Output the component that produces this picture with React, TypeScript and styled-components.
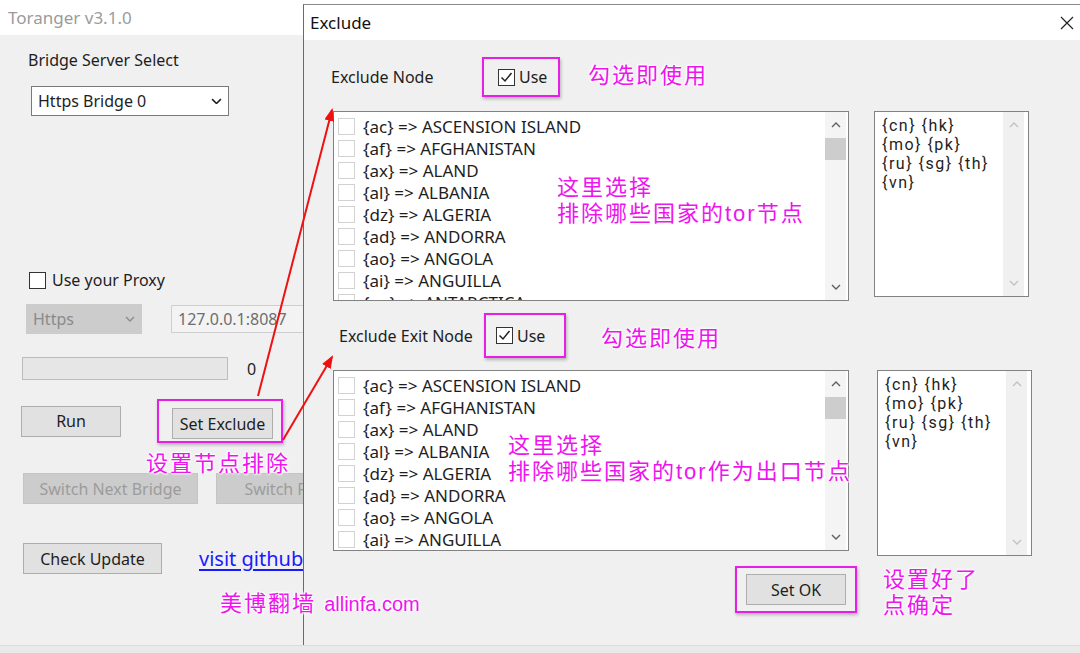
import React from "react";
import styled, { createGlobalStyle } from "styled-components";

const GlobalStyle = createGlobalStyle`
  html, body {
    margin: 0;
    padding: 0;
    background: #f0f0f0;
  }
  body {
    font-family: "Noto Sans", "Noto Sans CJK SC", sans-serif;
  }
`;

const Screen = styled.div`
  position: relative;
  width: 1080px;
  height: 653px;
  overflow: hidden;
  display: flex;
  flex-direction: column;
  background: #f0f0f0;
  color: #1e1e1e;
  font-size: 16px;
`;

const Desktop = styled.div`
  display: flex;
  height: 645px;
`;

const BottomStrip = styled.div`
  flex: 1;
  background: #e9e9e9;
  border-top: 1px solid #dcdcdc;
`;

/* ---------- main window ---------- */

const MainWindow = styled.div`
  width: 303px;
  flex: none;
  overflow: hidden;
  display: flex;
  flex-direction: column;
`;

const MainTitle = styled.div`
  height: 35px;
  flex: none;
  background: #fff;
  display: flex;
  align-items: center;
  padding-left: 8px;
  color: #9b9b9b;
  font-size: 17px;
  white-space: nowrap;
`;

const MainBody = styled.div`
  width: 380px;
  display: flex;
  flex-direction: column;
`;

const Row = styled.div<{ $mt?: number; $ml?: number; $gap?: number; $h?: number; $top?: boolean }>`
  display: flex;
  align-items: ${(p) => (p.$top ? "flex-start" : "center")};
  flex: none;
  margin-top: ${(p) => p.$mt ?? 0}px;
  margin-left: ${(p) => p.$ml ?? 0}px;
  gap: ${(p) => p.$gap ?? 0}px;
  ${(p) => (p.$h ? `height: ${p.$h}px;` : "")}
  white-space: nowrap;
`;

const Label = styled.span<{ $w?: number; $ml?: number }>`
  display: inline-block;
  line-height: 20px;
  ${(p) => (p.$w ? `width: ${p.$w}px;` : "")}
  margin-left: ${(p) => p.$ml ?? 0}px;
  flex: none;
`;

const SelectBox = styled.div<{ $w: number; $disabled?: boolean }>`
  box-sizing: border-box;
  width: ${(p) => p.$w}px;
  height: 30px;
  display: flex;
  align-items: center;
  justify-content: space-between;
  padding: 0 6px 0 6px;
  background: ${(p) => (p.$disabled ? "#cccccc" : "#ffffff")};
  border: 1px solid ${(p) => (p.$disabled ? "#cccccc" : "#7a7a7a")};
  color: ${(p) => (p.$disabled ? "#8a8a8a" : "#1e1e1e")};
`;

const TextInput = styled.div`
  box-sizing: border-box;
  width: 160px;
  height: 28px;
  display: flex;
  align-items: center;
  padding-left: 6px;
  background: #f3f3f3;
  border: 1px solid #cfcfcf;
  color: #6e6e6e;
`;

const Progress = styled.div`
  box-sizing: border-box;
  width: 206px;
  height: 23px;
  background: #e6e6e6;
  border: 1px solid #bcbcbc;
`;

const WinButton = styled.button<{ $w: number; $disabled?: boolean }>`
  box-sizing: border-box;
  width: ${(p) => p.$w}px;
  height: 31px;
  flex: none;
  margin: 0;
  padding: 0;
  display: flex;
  align-items: center;
  justify-content: center;
  font-family: inherit;
  font-size: 16px;
  white-space: nowrap;
  overflow: hidden;
  background: ${(p) => (p.$disabled ? "#cccccc" : "#e1e1e1")};
  border: 1px solid ${(p) => (p.$disabled ? "#c4c4c4" : "#adadad")};
  color: ${(p) => (p.$disabled ? "#9c9c9c" : "#1e1e1e")};
`;

const Link = styled.span`
  color: #1a1aff;
  font-size: 20px;
  text-decoration: underline;
  text-underline-offset: 3px;
`;

const Box = styled.span<{ $light?: boolean }>`
  box-sizing: border-box;
  width: 17px;
  height: 17px;
  flex: none;
  display: inline-flex;
  align-items: center;
  justify-content: center;
  background: #fff;
  border: 1px solid ${(p) => (p.$light ? "#d2d2d2" : "#333333")};
`;

const Mark = styled.div<{ $pad: string; $w?: number; $h?: number }>`
  box-sizing: border-box;
  display: flex;
  align-items: center;
  flex: none;
  padding: ${(p) => p.$pad};
  ${(p) => (p.$w ? `width: ${p.$w}px;` : "")}
  ${(p) => (p.$h ? `height: ${p.$h}px;` : "")}
  border: 2px solid #e61ee6;
  box-shadow: 1px 2px 3px rgba(0, 0, 0, 0.25);
`;

/* ---------- dialog ---------- */

const DialogColumn = styled.div`
  flex: 1;
  display: flex;
  flex-direction: column;
`;

const TopStrip = styled.div`
  height: 4px;
  flex: none;
  background: #fff;
`;

const Dialog = styled.div`
  flex: 1;
  display: flex;
  flex-direction: column;
  border-top: 1px solid #8a8a8a;
  border-left: 1px solid #6a6a6a;
`;

const DialogTitle = styled.div`
  height: 35px;
  flex: none;
  background: #fff;
  display: flex;
  align-items: center;
  justify-content: space-between;
  padding: 0 6px 0 6px;
  font-size: 17px;
  color: #111;
`;

const DialogBody = styled.div`
  flex: 1;
  display: flex;
  flex-direction: column;
  padding-left: 27px;
`;

const ListBox = styled.div<{ $h: number }>`
  box-sizing: border-box;
  width: 516px;
  height: ${(p) => p.$h}px;
  flex: none;
  display: flex;
  background: #fff;
  border: 1px solid #828282;
  overflow: hidden;
`;

const ListItems = styled.div`
  flex: 1;
  padding: 3px 0 0 4px;
  overflow: hidden;
  font-size: 17px;
`;

const ListRow = styled.div`
  height: 22px;
  display: flex;
  align-items: center;
  gap: 8px;
  white-space: nowrap;
`;

const Scroll = styled.div<{ $mr?: number; $dim?: boolean }>`
  width: 21px;
  flex: none;
  margin-right: ${(p) => p.$mr ?? 2}px;
  display: flex;
  flex-direction: column;
  align-items: center;
  background: ${(p) => (p.$dim ? "#f0f0f0" : "#f4f4f4")};
  color: ${(p) => (p.$dim ? "#c2c2c2" : "#606060")};
`;

const ScrollArrow = styled.div`
  height: 26px;
  width: 100%;
  display: flex;
  align-items: center;
  justify-content: center;
`;

const Thumb = styled.div`
  height: 22px;
  width: 100%;
  background: #cdcdcd;
`;

const Spacer = styled.div`
  flex: 1;
`;

const CodeBox = styled.div<{ $h: number }>`
  box-sizing: border-box;
  width: 155px;
  height: ${(p) => p.$h}px;
  flex: none;
  display: flex;
  background: #fff;
  border: 1px solid #828282;
`;

const CodeText = styled.div`
  flex: 1;
  padding: 4px 0 0 7px;
  font-family: Roboto, "Noto Sans", sans-serif;
  font-size: 16px;
  letter-spacing: 1.5px;
  line-height: 19px;
  white-space: nowrap;
`;

/* ---------- annotations ---------- */

const Overlay = styled.div`
  position: absolute;
  inset: 0;
  pointer-events: none;
`;

const Note = styled.div<{ $x: number; $y: number }>`
  position: absolute;
  left: ${(p) => p.$x}px;
  top: ${(p) => p.$y}px;
  font-family: "Liberation Sans", "Noto Sans CJK SC", sans-serif;
  font-size: 22px;
  line-height: 26px;
  letter-spacing: 2px;
  color: #ee14ee;
  white-space: nowrap;
  text-shadow: 0 0 2px #fff, 0 0 3px #fff, 1px 1px 2px #fff, -1px -1px 2px #fff;
`;

const Latin = styled.span`
  font-size: 20px;
  letter-spacing: 0;
`;

const Arrows = styled.svg`
  position: absolute;
  left: 0;
  top: 0;
`;

const Chevron = ({ up = false, size = 10 }: { up?: boolean; size?: number }) => (
  <svg width={size} height={size * 0.6} viewBox="0 0 10 6">
    <polyline
      points={up ? "1,5 5,1 9,5" : "1,1 5,5 9,1"}
      fill="none"
      stroke="currentColor"
      strokeWidth="1.4"
    />
  </svg>
);

const Check = () => (
  <svg width="13" height="13" viewBox="0 0 13 13">
    <polyline points="1.5,6.5 5,10 11.5,2" fill="none" stroke="#222" strokeWidth="1.5" />
  </svg>
);

const countries = [
  "{ac} => ASCENSION ISLAND",
  "{af} => AFGHANISTAN",
  "{ax} => ALAND",
  "{al} => ALBANIA",
  "{dz} => ALGERIA",
  "{ad} => ANDORRA",
  "{ao} => ANGOLA",
  "{ai} => ANGUILLA",
  "{aq} => ANTARCTICA",
];

const codes = ["{cn} {hk}", "{mo} {pk}", "{ru} {sg} {th}", "{vn}"];

const CountryList = ({ h }: { h: number }) => (
  <ListBox $h={h}>
    <ListItems>
      {countries.map((c) => (
        <ListRow key={c}>
          <Box $light />
          <span>{c}</span>
        </ListRow>
      ))}
    </ListItems>
    <Scroll>
      <ScrollArrow>
        <Chevron up />
      </ScrollArrow>
      <Thumb />
      <Spacer />
      <ScrollArrow>
        <Chevron />
      </ScrollArrow>
    </Scroll>
  </ListBox>
);

const Codes = ({ h }: { h: number }) => (
  <CodeBox $h={h}>
    <CodeText>
      {codes.map((c) => (
        <div key={c}>{c}</div>
      ))}
    </CodeText>
    <Scroll $dim $mr={4}>
      <ScrollArrow>
        <Chevron up />
      </ScrollArrow>
      <Spacer />
      <ScrollArrow>
        <Chevron />
      </ScrollArrow>
    </Scroll>
  </CodeBox>
);

function App() {
  return (
    <Screen>
      <GlobalStyle />
      <Desktop>
        <MainWindow>
          <MainTitle>Toranger v3.1.0</MainTitle>
          <MainBody>
            <Row $mt={15} $ml={28}>
              <Label>Bridge Server Select</Label>
            </Row>
            <Row $mt={16} $ml={31}>
              <SelectBox $w={198}>
                <span>Https Bridge 0</span>
                <Chevron size={11} />
              </SelectBox>
            </Row>
            <Row $mt={154} $ml={29} $gap={6}>
              <Box />
              <Label>Use your Proxy</Label>
            </Row>
            <Row $mt={14} $ml={26} $gap={29}>
              <SelectBox $w={116} $disabled>
                <span>Https</span>
                <Chevron size={10} />
              </SelectBox>
              <TextInput>127.0.0.1:8087</TextInput>
            </Row>
            <Row $mt={23} $ml={22} $gap={19}>
              <Progress />
              <Label>0</Label>
            </Row>
            <Row $mt={19} $ml={21} $gap={36} $h={44}>
              <WinButton $w={100}>Run</WinButton>
              <Mark $pad="7px 8px 2px 13px" $h={44}>
                <WinButton $w={101}>Set Exclude</WinButton>
              </Mark>
            </Row>
            <Row $mt={30} $ml={23} $gap={18}>
              <WinButton $w={175} $disabled>
                Switch Next Bridge
              </WinButton>
              <WinButton $w={150} $disabled>
                Switch Relay
              </WinButton>
            </Row>
            <Row $mt={39} $ml={23} $gap={37}>
              <WinButton $w={139}>Check Update</WinButton>
              <Link>visit github</Link>
            </Row>
          </MainBody>
        </MainWindow>

        <DialogColumn>
          <TopStrip />
          <Dialog>
            <DialogTitle>
              <span>Exclude</span>
              <svg width="14" height="14" viewBox="0 0 14 14">
                <path d="M1 1 L13 13 M13 1 L1 13" stroke="#222" strokeWidth="1.2" />
              </svg>
            </DialogTitle>
            <DialogBody>
              <Row $mt={17}>
                <Label $w={151}>Exclude Node</Label>
                <Mark $pad="0 8px 0 14px" $h={40} $w={78}>
                  <Box>
                    <Check />
                  </Box>
                  <Label $ml={4}>Use</Label>
                </Mark>
              </Row>
              <Row $mt={14} $ml={2} $gap={25} $top>
                <CountryList h={190} />
                <Codes h={186} />
              </Row>
              <Row $mt={12} $ml={8}>
                <Label $w={145}>Exclude Exit Node</Label>
                <Mark $pad="0 8px 0 10px" $h={45} $w={82}>
                  <Box>
                    <Check />
                  </Box>
                  <Label $ml={4}>Use</Label>
                </Mark>
              </Row>
              <Row $mt={12} $ml={2} $gap={28} $top>
                <CountryList h={181} />
                <Codes h={186} />
              </Row>
              <Row $mt={10} $ml={404}>
                <Mark $pad="6px 9px 6px 9px">
                  <WinButton $w={100}>Set OK</WinButton>
                </Mark>
              </Row>
            </DialogBody>
          </Dialog>
        </DialogColumn>
      </Desktop>
      <BottomStrip />

      <Overlay>
        <Arrows width="1080" height="653" viewBox="0 0 1080 653">
          <defs>
            <marker
              id="head"
              markerWidth="13"
              markerHeight="10"
              refX="11"
              refY="5"
              orient="auto"
              markerUnits="userSpaceOnUse"
            >
              <path d="M0 0 L13 5 L0 10 Z" fill="#ee1111" />
            </marker>
          </defs>
          <line x1="258" y1="396" x2="332" y2="110" stroke="#ee1111" strokeWidth="2" markerEnd="url(#head)" />
          <line x1="283" y1="440" x2="332" y2="357" stroke="#ee1111" strokeWidth="2" markerEnd="url(#head)" />
        </Arrows>
        <Note $x={588} $y={63}>勾选即使用</Note>
        <Note $x={557} $y={175}>
          这里选择
          <br />
          排除哪些国家的tor节点
        </Note>
        <Note $x={601} $y={326}>勾选即使用</Note>
        <Note $x={508} $y={433}>
          这里选择
          <br />
          排除哪些国家的tor作为出口节点
        </Note>
        <Note $x={146} $y={451}>设置节点排除</Note>
        <Note $x={220} $y={591}>
          美博翻墙 <Latin>allinfa.com</Latin>
        </Note>
        <Note $x={883} $y={567}>
          设置好了
          <br />
          点确定
        </Note>
      </Overlay>
    </Screen>
  );
}

export default App;
